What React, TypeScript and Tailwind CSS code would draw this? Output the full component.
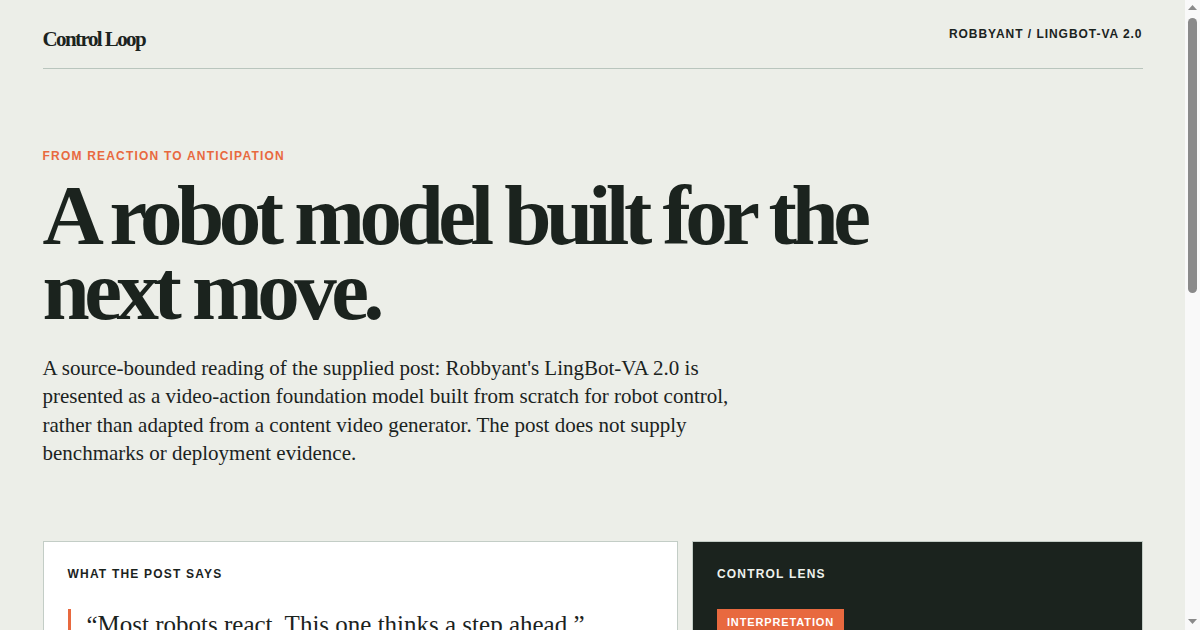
const serif = "font-['Liberation_Serif','Times_New_Roman',serif]"
const sans = "font-['Liberation_Sans',Arial,sans-serif]"

function Label({ children, dark }: { children: React.ReactNode; dark?: boolean }) {
  return (
    <p className={`${sans} text-[12px] font-bold uppercase tracking-[0.1em] leading-4 ${dark ? 'text-[#eef1ec]' : 'text-[#1b231e]'}`}>
      {children}
    </p>
  )
}

// browser scrollbar as it shows in the screenshot
function Scrollbar() {
  return (
    <div className="flex w-[15px] shrink-0 flex-col items-center bg-[#f9f9f9] pt-[5px] pb-[6px]">
      <svg width="9" height="5" viewBox="0 0 9 5" className="fill-[#8a8a8a]">
        <path d="M4.5 0 9 5H0z" />
      </svg>
      <div className="mt-[8px] h-[275px] w-[9px] rounded-full bg-[#8a8a8a]" />
      <div className="flex-1" />
      <svg width="9" height="5" viewBox="0 0 9 5" className="fill-[#8a8a8a]">
        <path d="M0 0h9L4.5 5z" />
      </svg>
    </div>
  )
}

export default function App() {
  return (
    <div className="flex h-screen bg-[#eceee8] text-[#1b231e]">
      <main className="min-w-0 flex-1 overflow-y-auto [scrollbar-width:none]">
        <div className="mx-auto max-w-[1100px] pb-24">
          <header className="flex items-start justify-between border-b border-[#b9c5bd] pt-[27px] pb-[17px]">
            <span className={`${serif} text-[21px] font-bold tracking-[-0.075em] leading-6`}>Control Loop</span>
            <span className={`${sans} -mt-[1px] text-[12px] font-bold uppercase leading-4 tracking-[0.08em]`}>Robbyant / LingBot-VA 2.0</span>
          </header>

          <section className="pt-[78px]">
            <p className={`${sans} text-[12px] font-bold uppercase tracking-[0.1em] text-[#e8693f]`}>From reaction to anticipation</p>
            <h1 className={`${serif} mt-[13px] text-[85px] font-bold leading-[0.88] tracking-[-0.065em] max-w-[880px]`}>
              A robot model built for the next move.
            </h1>
            <p className={`${serif} mt-[26px] max-w-[720px] text-[21px] leading-[1.36]`}>
              A source-bounded reading of the supplied post: Robbyant's LingBot-VA 2.0 is presented as a video-action
              foundation model built from scratch for robot control, rather than adapted from a content video generator.
              The post does not supply benchmarks or deployment evidence.
            </p>
          </section>

          <section className="mt-[73px] grid grid-cols-[minmax(0,1.41fr)_minmax(0,1fr)] gap-[14px]">
            <div className="border border-[#c3cdc6] bg-white p-6">
              <Label>What the post says</Label>
              <blockquote className={`${serif} mt-[27px] border-l-[3px] border-[#e8693f] pl-4 text-[25px] leading-[1.25]`}>
                “Most robots react. This one thinks a step ahead.”
              </blockquote>
              <p className={`${serif} mt-6 text-[18px] leading-[1.45]`}>
                The post frames LingBot-VA 2.0 as a model that predicts how a scene will unfold and chooses actions
                against that prediction, instead of responding only to the current frame.
              </p>
              <ul className={`${serif} mt-5 space-y-3 text-[17px] leading-[1.45]`}>
                <li className="border-t border-[#dde3de] pt-3">Video-action foundation model</li>
                <li className="border-t border-[#dde3de] pt-3">Built from scratch for robot control</li>
                <li className="border-t border-[#dde3de] pt-3">Not adapted from a content video generator</li>
              </ul>
            </div>
            <div className="border border-[#c3cdc6] bg-[#1b231e] p-6 text-[#eef1ec]">
              <Label dark>Control lens</Label>
              <span className={`${sans} mt-[27px] inline-block bg-[#e8693f] px-[10px] py-[5px] text-[11px] font-bold uppercase tracking-[0.08em] text-white`}>
                Interpretation
              </span>
              <p className={`${serif} mt-5 text-[20px] leading-[1.4]`}>
                Anticipation matters in control because actions take time. A policy that models the next few frames can
                plan around motion rather than chase it.
              </p>
              <p className={`${serif} mt-4 text-[17px] leading-[1.45] text-[#b9c5bd]`}>
                Without benchmarks, this remains a claim about design intent, not measured performance.
              </p>
            </div>
          </section>

          <section className="mt-16 grid grid-cols-3 gap-[14px]">
            {[
              ['Claim', 'Predicts ahead rather than reacting frame by frame.'],
              ['Origin', 'Trained for robot control from the start.'],
              ['Missing', 'No benchmarks or deployment evidence supplied.'],
            ].map(([k, v]) => (
              <div key={k} className="border-t-2 border-[#1b231e] pt-4">
                <Label>{k}</Label>
                <p className={`${serif} mt-3 text-[18px] leading-[1.45]`}>{v}</p>
              </div>
            ))}
          </section>

          <footer className={`${sans} mt-20 flex justify-between border-t border-[#b9c5bd] pt-5 text-[12px] font-bold uppercase tracking-[0.08em]`}>
            <span>Control Loop</span>
            <span>Source-bounded notes</span>
          </footer>
        </div>
      </main>
      <Scrollbar />
    </div>
  )
}
